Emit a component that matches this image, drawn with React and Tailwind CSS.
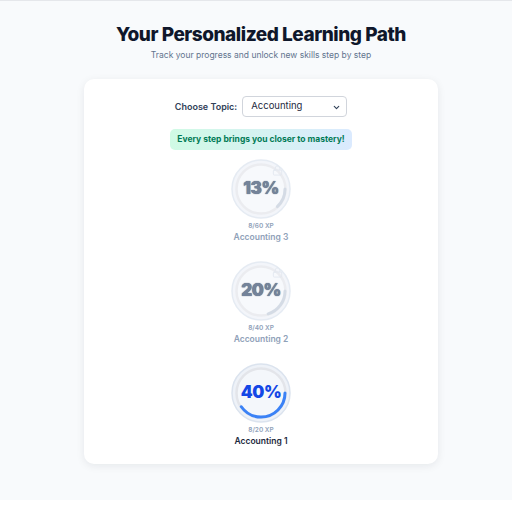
import React from "react";
import { ChevronDown, Lock } from "lucide-react";

const nodes = [
  { name: "Accounting 3", xp: "8/60 XP", pct: 13, locked: true },
  { name: "Accounting 2", xp: "8/40 XP", pct: 20, locked: true },
  { name: "Accounting 1", xp: "8/20 XP", pct: 40, locked: false },
];

function Ring({ pct, locked }) {
  const r = 24;
  const c = 2 * Math.PI * r;
  return (
    <div className="relative w-[60px] h-[60px]">
      <svg width="60" height="60" viewBox="0 0 60 60" className={`absolute inset-0 ${locked ? "opacity-70" : ""}`}>
        <circle cx="30" cy="30" r="29" fill="#eef2f8" stroke="#dbe3ee" strokeWidth="1.5" />
        <circle cx="30" cy="30" r="24.5" fill="#f4f7fb" stroke="#e3e5ea" strokeWidth="2.5" />
        <circle
          cx="30"
          cy="30"
          r={r}
          fill="none"
          stroke={locked ? "#c3cddb" : "#3b82f6"}
          strokeWidth="3"
          strokeLinecap="round"
          strokeDasharray={`${(pct / 100) * c} ${c}`}
        />
      </svg>
      {locked && (
        <Lock className="absolute right-[8px] top-[6px] w-[11px] h-[11px] text-slate-200" strokeWidth={2} />
      )}
      <div
        className={`absolute inset-0 flex items-center justify-center text-[17px] font-black tracking-tight ${
          locked
            ? "text-[#74839a] [text-shadow:0_0_1px_#475569]"
            : "text-blue-700"
        }`}
      >
        {pct}%
      </div>
    </div>
  );
}

export default function App() {
  return (
    <div
      className="min-h-[500px] bg-slate-50 border-t border-gray-200 pl-[10px] pt-[20px]"
      style={{ fontFamily: "Inter, 'Noto Sans', sans-serif" }}
    >
      <div className="flex flex-col items-center">
        <h1 className="text-[19px] leading-[28px] font-extrabold text-slate-900 tracking-tight">
          Your Personalized Learning Path
        </h1>
        <p className="text-[8.5px] leading-[12px] text-slate-500">
          Track your progress and unlock new skills step by step
        </p>
        <div className="mt-[18px] w-[354px] bg-white rounded-[10px] shadow-[0_2px_8px_rgba(15,23,42,0.08)] pt-[17px] pb-[17px] flex flex-col items-center">
          <div className="flex items-center gap-[5px]">
            <span className="text-[9px] font-semibold text-slate-700">Choose Topic:</span>
            <div className="relative w-[105px] h-[21px] border border-gray-300 rounded-[4px] bg-white flex items-center pl-[8px] text-[9.5px] text-slate-800">
              Accounting
              <ChevronDown className="absolute right-[5px] top-[6px] w-[9px] h-[9px] text-slate-700" strokeWidth={3} />
            </div>
          </div>
          <div className="mt-[12px] h-[21px] w-[182px] rounded-[5px] bg-gradient-to-r from-emerald-100 to-blue-100 flex items-center justify-center text-[8.5px] font-bold text-emerald-700">
            Every step brings you closer to mastery!
          </div>
          <div className="mt-[9px] flex flex-col items-center gap-[18px]">
            {nodes.map((n) => (
              <div key={n.name} className="flex flex-col items-center">
                <Ring pct={n.pct} locked={n.locked} />
                <div className="mt-[2px] text-[6.5px] leading-[10px] font-semibold text-slate-400">{n.xp}</div>
                <div className={`text-[8.5px] leading-[12px] font-semibold ${n.locked ? "text-slate-400" : "text-slate-800"}`}>
                  {n.name}
                </div>
              </div>
            ))}
          </div>
        </div>
      </div>
    </div>
  );
}
